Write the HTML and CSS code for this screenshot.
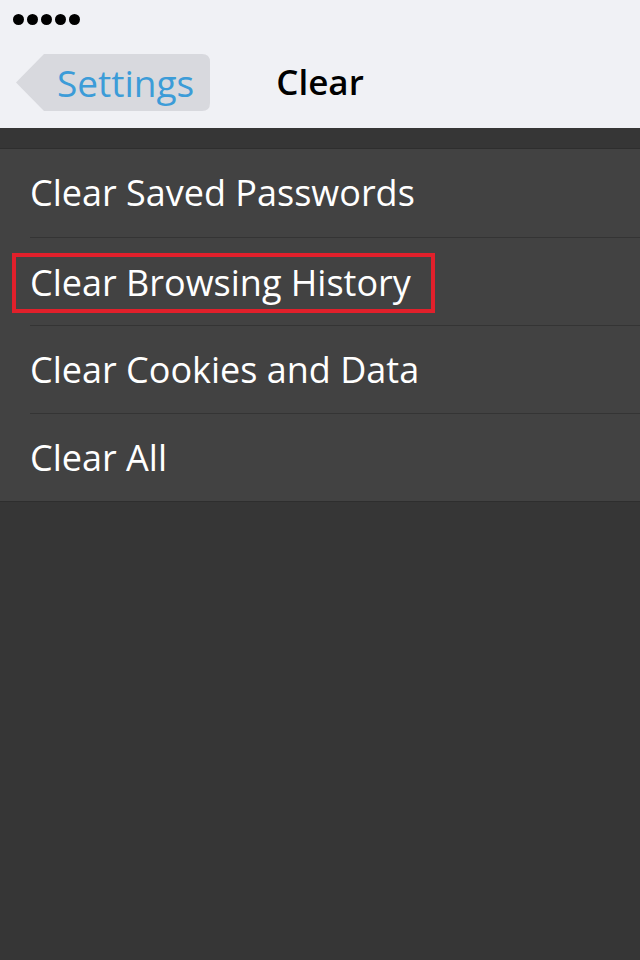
FILE: index.html
```html
<html>
<head>
  <meta charset="UTF-8">
  <title>Clear</title>
  <link rel="stylesheet" href="styles.css">
</head>
<body>
<div class="header">
  <div class="status"><span></span><span></span><span></span><span></span><span></span></div>
  <div class="navbar">
    <div class="nav-left">
      <a class="back" href="javascript:">
        <svg class="back-bg" width="194" height="57" viewBox="0 0 194 57">
          <path d="M28 0 H186 Q194 0 194 8 V49 Q194 57 186 57 H28 L0 28.5 Z" fill="#d8d9de"/>
        </svg>
        <span class="back-text">Settings</span>
      </a>
    </div>
    <div class="nav-title">Clear</div>
    <div class="nav-right"></div>
  </div>
</div>
<div class="main">
  <div class="gap"></div>
  <ul class="list">
    <li class="item">Clear Saved Passwords</li>
    <li class="item"><span class="marked">Clear Browsing History</span></li>
    <li class="item">Clear Cookies and Data</li>
    <li class="item">Clear All</li>
  </ul>
</div>
</body>
</html>
```

FILE: styles.css
```css
body {
  margin: 0;
  width: 640px;
  height: 960px;
  background-color: #363636;
  font-family: "Open Sans", "Noto Sans", sans-serif;
}

.header {
  height: 128px;
  background-color: #f0f1f5;
}

.status {
  display: flex;
  gap: 3px;
  padding: 14px 0 0 13px;
  height: 26px;
  box-sizing: border-box;
}

.status span {
  width: 11px;
  height: 11px;
  border-radius: 50%;
  background-color: #000;
}

.navbar {
  display: grid;
  grid-template-columns: 1fr auto 1fr;
  align-items: center;
  height: 102px;
}

.nav-left {
  padding-left: 16px;
  align-self: start;
  padding-top: 28px;
}

.back {
  position: relative;
  display: block;
  width: 194px;
  height: 57px;
  text-decoration: none;
}

.back-bg {
  display: block;
}

.back-text {
  position: absolute;
  left: 41px;
  top: 0;
  line-height: 57px;
  font-size: 37px;
  color: #3c9cd8;
}

.nav-title {
  font-size: 35px;
  font-weight: 600;
  color: #000;
  padding-top: 8px;
}

.gap {
  height: 20px;
  border-bottom: 1px solid #2e2e2e;
}

.list {
  list-style: none;
  margin: 0;
  padding: 0;
  background-color: #424242;
  border-bottom: 1px solid #2e2e2e;
}

.item {
  height: 88px;
  line-height: 88px;
  margin-left: 30px;
  font-size: 36px;
  color: #fff;
  border-top: 1px solid #343434;
  box-sizing: border-box;
}

.item:first-child {
  border-top: none;
}

.marked {
  display: inline-block;
  vertical-align: middle;
  line-height: 52px;
  margin-top: -4px;
  margin-left: -18px;
  padding: 0 20px 0 14px;
  border: 4px solid #e1202b;
}
```
